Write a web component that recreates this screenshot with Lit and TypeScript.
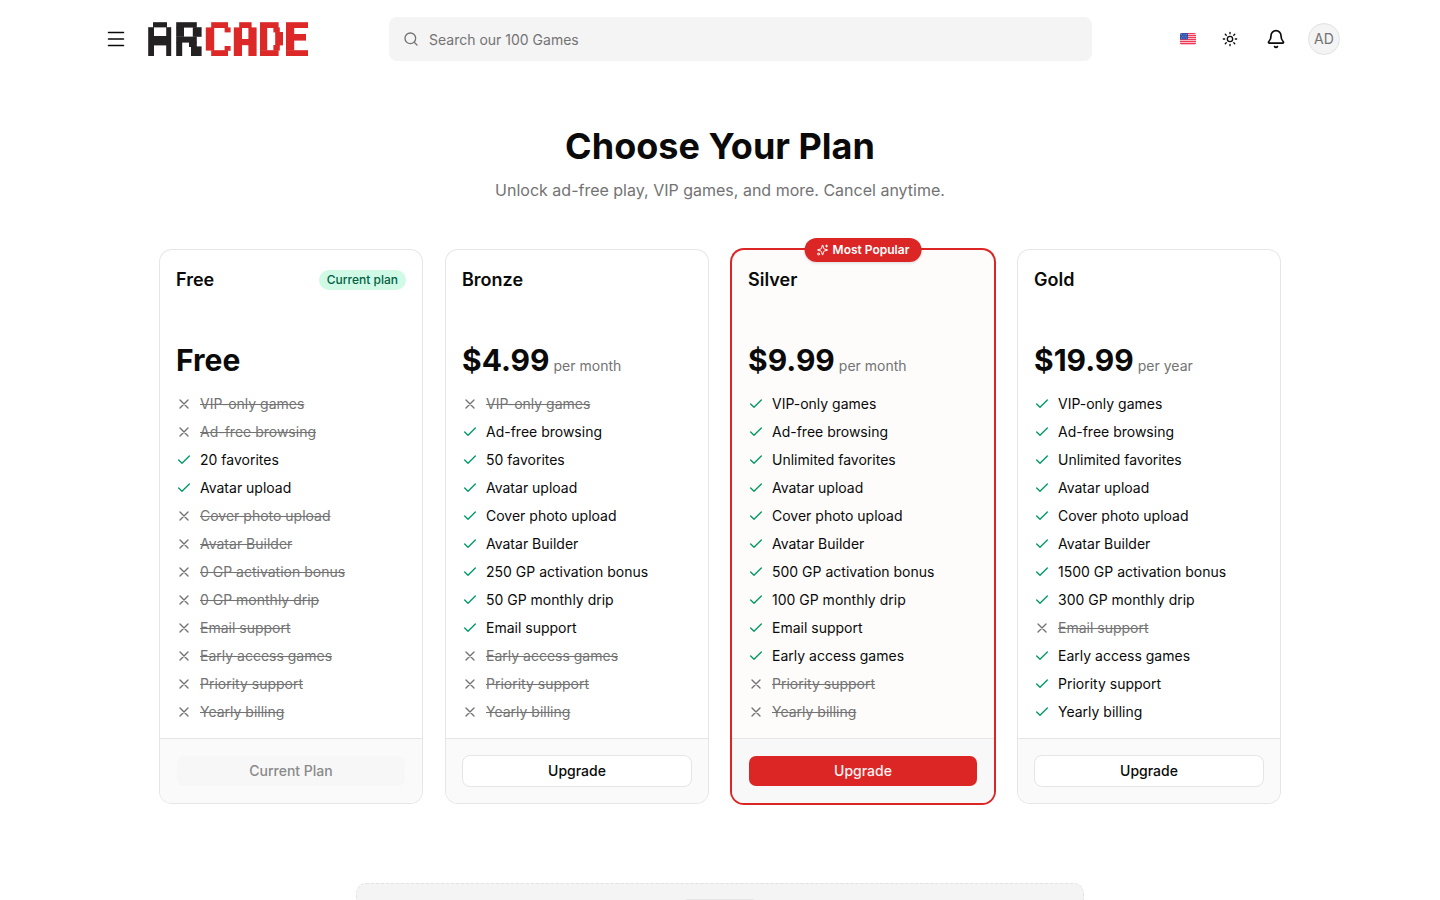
import { LitElement, html, css, svg, nothing } from "lit";
import { customElement } from "lit/decorators.js";
import { classMap } from "lit/directives/class-map.js";

interface Plan {
  name: string;
  price: string;
  period?: string;
  current?: boolean;
  popular?: boolean;
  features: [string, boolean][];
}

const makeFeatures = (favorites: string, bonus: string, drip: string, flags: string): [string, boolean][] =>
  [
    "VIP-only games",
    "Ad-free browsing",
    `${favorites} favorites`,
    "Avatar upload",
    "Cover photo upload",
    "Avatar Builder",
    `${bonus} GP activation bonus`,
    `${drip} GP monthly drip`,
    "Email support",
    "Early access games",
    "Priority support",
    "Yearly billing",
  ].map((label, i) => [label, flags[i] === "1"] as [string, boolean]);

const plans: Plan[] = [
  { name: "Free", price: "Free", current: true, features: makeFeatures("20", "0", "0", "001100000000") },
  { name: "Bronze", price: "$4.99", period: "per month", features: makeFeatures("50", "250", "50", "011111111000") },
  { name: "Silver", price: "$9.99", period: "per month", popular: true, features: makeFeatures("Unlimited", "500", "100", "111111111100") },
  { name: "Gold", price: "$19.99", period: "per year", features: makeFeatures("Unlimited", "1500", "300", "111111110111") },
];

const icon = (body: unknown, size = 16, width = 2) => html`<svg
  width=${size} height=${size} viewBox="0 0 24 24" fill="none" stroke="currentColor"
  stroke-width=${width} stroke-linecap="round" stroke-linejoin="round" aria-hidden="true">${body}</svg>`;

const menuIcon = svg`<path d="M4.5 5.5h15M4.5 12h15M4.5 18.5h15"/>`;
const searchIcon = svg`<path d="m21 21-4.34-4.34"/><circle cx="11" cy="11" r="8"/>`;
const sunIcon = svg`<circle cx="12" cy="12" r="4"/><path d="M12 2v2M12 20v2M4.93 4.93l1.41 1.41M17.66 17.66l1.41 1.41M2 12h2M20 12h2M6.34 17.66l-1.41 1.41M19.07 4.93l-1.41 1.41"/>`;
const bellIcon = svg`<path d="M10.27 21a2 2 0 0 0 3.46 0"/><path d="M3.26 15.33A1 1 0 0 0 4 17h16a1 1 0 0 0 .74-1.67C19.41 13.96 18 12.5 18 8A6 6 0 0 0 6 8c0 4.5-1.41 5.96-2.74 7.33"/>`;
const checkIcon = svg`<path d="M20 6 9 17l-5-5"/>`;
const crossIcon = svg`<path d="M18 6 6 18M6 6l12 12"/>`;
const sparklesIcon = svg`<path d="M9.94 15.5A2 2 0 0 0 8.5 14.06l-6.14-1.58a.5.5 0 0 1 0-.96L8.5 9.94A2 2 0 0 0 9.94 8.5l1.58-6.14a.5.5 0 0 1 .96 0l1.58 6.14a2 2 0 0 0 1.44 1.44l6.14 1.58a.5.5 0 0 1 0 .96l-6.14 1.58a2 2 0 0 0-1.44 1.44l-1.58 6.14a.5.5 0 0 1-.96 0z"/><path d="M20 2v4M22 4h-4"/><circle cx="4" cy="20" r="2"/>`;

// Blocks of the pixel-art logo: x, y, width, height.
const darkBlocks = [
  [5, 0.2, 14, 5.2], [0.2, 5.2, 5.8, 28.8], [18.2, 5.2, 5, 28.8], [5, 14, 14, 9.4],
  [28.2, 0.2, 20.6, 5.4], [28.2, 5, 7.8, 9.8], [44.8, 5.2, 8.8, 9.6],
  [28.2, 14.6, 20.6, 6], [28.2, 20, 6, 14], [41, 20, 7.8, 5], [43, 24.4, 10.6, 9.6],
];
const redBlocks = [
  [63.2, 0.2, 16.8, 5.8], [57.8, 5.4, 8.4, 23.2], [76.6, 5.4, 6, 5], [76.6, 24, 6, 4.8], [63.2, 28.2, 16.8, 5.8],
  [91.2, 0.2, 12.4, 5.8], [85.8, 5.4, 8.2, 28.6], [100.4, 5.4, 8.2, 28.6], [93, 17, 8, 6.2],
  [112, 0.2, 18.6, 5.8], [112, 5.4, 7.2, 23.2], [125.4, 5.4, 6.4, 5], [127.2, 10, 7.8, 13.4], [125.4, 23, 6.4, 5.6],
  [112, 28.2, 18.6, 5.8],
  [138, 0.2, 22, 5.8], [138, 5.4, 8.2, 23.2], [146, 12, 12, 6.6], [138, 28.2, 22, 5.8],
];

const blocks = (list: number[][]) =>
  list.map(([x, y, w, h]) => svg`<rect x=${x} y=${y} width=${w} height=${h} />`);

const logo = html`<svg width="160" height="34" viewBox="0 0 160 34" aria-hidden="true">
  <g fill="#232122">${blocks(darkBlocks)}</g>
  <g fill="#dc2928">${blocks(redBlocks)}</g>
</svg>`;

const flag = html`<svg class="flag" width="16" height="12" viewBox="0 0 16 12" aria-hidden="true">
  <rect width="16" height="12" fill="#fbdfe4" />
  ${[0, 2, 4, 6, 8, 10].map((y) => svg`<rect y=${y} width="16" height="1.2" fill="#ee3a56" />`)}
  <rect width="8" height="6.4" fill="#3153ae" />
  ${[[1.5, 1.4], [4, 1.4], [6.5, 1.4], [2.8, 3.2], [5.2, 3.2], [1.5, 5], [4, 5], [6.5, 5]].map(
    ([x, y]) => svg`<circle cx=${x} cy=${y} r="0.45" fill="#c3cfee" />`,
  )}
</svg>`;

@customElement("site-header")
export class SiteHeader extends LitElement {
  static styles = css`
    :host { display: block; }
    * { box-sizing: border-box; }
    svg { display: block; flex: none; }
    .bar { display: flex; align-items: center; max-width: 1240px; margin: 0 auto; padding: 17px 0; }
    button { display: grid; place-items: center; width: 32px; height: 32px; padding: 0; border: 0; background: none; color: inherit; font: inherit; cursor: pointer; }
    .logo { margin-left: 16px; }
    .search { display: flex; align-items: center; gap: 10px; flex: 1; height: 44px; margin: 0 80px 0 81px; padding: 0 14px; border-radius: 8px; background: #f4f4f4; color: #737373; }
    input { flex: 1; min-width: 0; height: 100%; padding: 0; border: 0; outline: 0; background: none; color: #0a0a0a; font: inherit; }
    input::placeholder { color: #737373; opacity: 1; }
    .actions { display: flex; align-items: center; gap: 12px; }
    .flag { border-radius: 2px; }
    .theme { width: 28px; }
    .bell { width: 40px; }
    .avatar { border: 1px solid #e2e2e2; border-radius: 50%; background: #f4f4f4; color: #737373; }
  `;
  render() {
    return html`<header class="bar">
      <button aria-label="Menu">${icon(menuIcon, 24, 1.5)}</button>
      <a class="logo" href="#" aria-label="Arcade home">${logo}</a>
      <label class="search">
        ${icon(searchIcon)}
        <input type="search" placeholder="Search our 100 Games" aria-label="Search games" />
      </label>
      <div class="actions">
        <button aria-label="Language">${flag}</button>
        <button class="theme" aria-label="Theme">${icon(sunIcon)}</button>
        <button class="bell" aria-label="Notifications">${icon(bellIcon, 20)}</button>
        <button class="avatar" aria-label="Account">AD</button>
      </div>
    </header>`;
  }
}

@customElement("plan-card")
export class PlanCard extends LitElement {
  static properties = { plan: { attribute: false } };
  declare plan: Plan;

  static styles = css`
    :host { display: block; }
    * { box-sizing: border-box; }
    svg { display: block; flex: none; }
    .card { position: relative; display: flex; flex-direction: column; height: 100%; border-radius: 12px; background: #fff; box-shadow: 0 0 0 1px #e6e6e6; }
    .popular { background: #fdfcfb; box-shadow: 0 0 0 2px #dc2626; }
    .ribbon { position: absolute; top: -12px; left: 50%; transform: translateX(-50%); display: flex; align-items: center; gap: 4px; height: 24px; padding: 0 12px; border-radius: 12px; background: #dc2626; color: #fff; font-size: 12px; line-height: 16px; font-weight: 600; white-space: nowrap; box-shadow: 0 1px 3px rgb(0 0 0 / 15%); }
    .top { display: flex; align-items: center; justify-content: space-between; padding: 16px 16px 48px; }
    h2 { margin: 0; font-size: 18px; line-height: 28px; font-weight: 600; }
    .badge { padding: 2px 8px; border-radius: 10px; background: #d0fae5; color: #006045; font-size: 12px; line-height: 16px; font-weight: 500; }
    .price { display: flex; align-items: baseline; gap: 4px; margin: 0; padding: 0 16px; }
    strong { font-size: 30px; line-height: 36px; font-weight: 700; }
    .period { color: #737373; line-height: 20px; }
    ul { display: grid; gap: 8px; margin: 0; padding: 16px; list-style: none; }
    li { display: flex; align-items: center; gap: 8px; }
    li svg { color: #009966; }
    .off { color: #737373; text-decoration: line-through; }
    .off svg { color: #737373; }
    .foot { margin-top: auto; padding: 16px; border-top: 1px solid #e5e5e5; border-radius: 0 0 12px 12px; background: #fafafa; }
    .popular .foot { background: #f8f8f8; }
    button { display: block; width: 100%; height: 32px; padding: 0; border: 1px solid #e5e5e5; border-radius: 8px; background: #fff; color: #0a0a0a; font: inherit; font-weight: 500; cursor: pointer; }
    .popular button { border-color: transparent; background: #dc2626 padding-box; color: #fef2f2; }
    button:disabled { border-color: transparent; background: #f7f7f7 padding-box; color: #8a8a8a; cursor: default; }
  `;

  render() {
    const p = this.plan;
    return html`<article class=${classMap({ card: true, popular: !!p.popular })}>
      ${p.popular ? html`<span class="ribbon">${icon(sparklesIcon, 12)}Most Popular</span>` : nothing}
      <div class="top">
        <h2>${p.name}</h2>
        ${p.current ? html`<span class="badge">Current plan</span>` : nothing}
      </div>
      <p class="price"><strong>${p.price}</strong>${p.period ? html`<span class="period">${p.period}</span>` : nothing}</p>
      <ul>
        ${p.features.map(
          ([label, on]) => html`<li class=${classMap({ off: !on })}>${icon(on ? checkIcon : crossIcon)}<span>${label}</span></li>`,
        )}
      </ul>
      <div class="foot">
        <button ?disabled=${!!p.current}>${p.current ? "Current Plan" : "Upgrade"}</button>
      </div>
    </article>`;
  }
}

@customElement("app-root")
export class AppRoot extends LitElement {
  static styles = css`
    :host { display: block; min-height: 100vh; background: #fff; color: #0a0a0a; font: 400 14px/20px Inter, sans-serif; }
    * { box-sizing: border-box; }
    main { max-width: 1152px; margin: 0 auto; padding: 48px 16px; }
    .intro { text-align: center; }
    h1 { margin: 0; font-size: 36px; line-height: 40px; font-weight: 700; }
    .intro p { margin: 12px 0 48px; color: #737373; font-size: 16px; line-height: 24px; }
    .plans { display: grid; grid-template-columns: repeat(4, 1fr); gap: 24px; }
    .promo { display: flex; justify-content: center; align-items: flex-start; max-width: 728px; height: 90px; margin: 80px auto 0; padding: 15px; border: 1px dashed #e2e2e2; border-radius: 10px; background: #f4f4f4; }
    .chip { width: 72px; height: 20px; border-radius: 4px; background: #e5e5e5; }
  `;
  render() {
    return html`<site-header></site-header>
      <main>
        <div class="intro">
          <h1>Choose Your Plan</h1>
          <p>Unlock ad-free play, VIP games, and more. Cancel anytime.</p>
        </div>
        <section class="plans">${plans.map((p) => html`<plan-card .plan=${p}></plan-card>`)}</section>
        <aside class="promo"><span class="chip"></span></aside>
      </main>`;
  }
}
